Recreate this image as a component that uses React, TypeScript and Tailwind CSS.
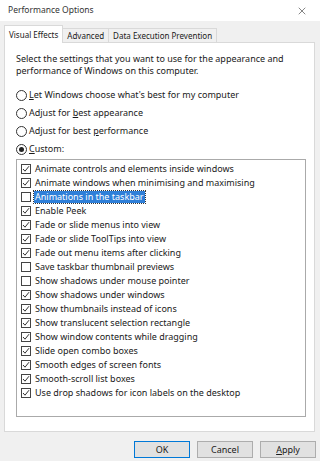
import { X } from "lucide-react";

type Effect = {
  label: string;
  checked: boolean;
  selected?: boolean;
};

const effects: Effect[] = [
  { label: "Animate controls and elements inside windows", checked: true },
  { label: "Animate windows when minimising and maximising", checked: true },
  { label: "Animations in the taskbar", checked: false, selected: true },
  { label: "Enable Peek", checked: true },
  { label: "Fade or slide menus into view", checked: true },
  { label: "Fade or slide ToolTips into view", checked: true },
  { label: "Fade out menu items after clicking", checked: true },
  { label: "Save taskbar thumbnail previews", checked: false },
  { label: "Show shadows under mouse pointer", checked: false },
  { label: "Show shadows under windows", checked: true },
  { label: "Show thumbnails instead of icons", checked: true },
  { label: "Show translucent selection rectangle", checked: true },
  { label: "Show window contents while dragging", checked: true },
  { label: "Slide open combo boxes", checked: true },
  { label: "Smooth edges of screen fonts", checked: true },
  { label: "Smooth-scroll list boxes", checked: true },
  { label: "Use drop shadows for icon labels on the desktop", checked: true },
];

function Radio({ on, children }: { on?: boolean; children: React.ReactNode }) {
  return (
    <div className="flex items-center h-[18px] gap-[2px]">
      <span className="w-[11px] h-[11px] rounded-full border border-[#333] bg-white flex items-center justify-center">
        {on && <span className="w-[5px] h-[5px] rounded-full bg-[#222]" />}
      </span>
      <span>{children}</span>
    </div>
  );
}

function CheckBox({ checked }: { checked: boolean }) {
  return (
    <span className="w-[10px] h-[10px] border border-[#444] bg-white flex items-center justify-center shrink-0">
      {checked && (
        <svg width="8" height="8" viewBox="0 0 8 8">
          <polyline points="1,4 3,6.2 7,1.2" fill="none" stroke="#333" strokeWidth="1" />
        </svg>
      )}
    </span>
  );
}

export default function App() {
  return (
    <div
      className="w-[320px] h-[461px] bg-[#f0f0f0] text-[#1a1a1a] text-[9px] overflow-hidden"
      style={{ fontFamily: '"Noto Sans", "Open Sans", sans-serif' }}
    >
      {/* TITLE BAR */}
      <div className="h-[21px] bg-white flex items-center justify-between pl-[8px] pr-[12px]">
        <span className="text-[8.5px] text-[#333]">Performance Options</span>
        <X size={12} strokeWidth={1.2} className="text-[#333]" />
      </div>

      {/* TABS */}
      <div className="flex items-end pl-[4px] h-[21px] text-[8px]">
        <div className="relative z-10 h-[18px] -mb-px px-[4px] bg-white border border-b-0 border-[#d9d9d9] flex items-center">
          Visual Effects
        </div>
        <div className="h-[14px] px-[4px] border border-l-0 border-b-0 border-[#d9d9d9] flex items-center">
          Advanced
        </div>
        <div className="h-[14px] px-[4px] border border-l-0 border-b-0 border-[#d9d9d9] flex items-center">
          Data Execution Prevention
        </div>
      </div>

      {/* PANEL */}
      <div className="ml-[4px] w-[311px] h-[390px] bg-white border border-[#d9d9d9] pl-[11px] pr-[10px] pt-[10px]">
        <p className="leading-[12px] whitespace-nowrap">
          Select the settings that you want to use for the appearance and
          <br />
          performance of Windows on this computer.
        </p>

        <div className="mt-[9px] flex flex-col">
          <Radio>
            <span className="underline">L</span>et Windows choose what's best for my computer
          </Radio>
          <Radio>
            Adjust for <span className="underline">b</span>est appearance
          </Radio>
          <Radio>
            Adjust for best <span className="underline">p</span>erformance
          </Radio>
          <Radio on>
            <span className="underline">C</span>ustom:
          </Radio>
        </div>

        {/* LIST BOX */}
        <div className="mt-[1px] w-[290px] h-[258px] border border-[#aaa] pt-[2px] pl-[4px]">
          {effects.map((e) => (
            <div key={e.label} className="h-[14px] flex items-center gap-[3px]">
              <CheckBox checked={e.checked} />
              <span
                className={
                  e.selected
                    ? "bg-[#2f7fd8] text-white px-[1px] leading-[12px] outline outline-1 outline-dotted outline-[#333]"
                    : "px-[1px]"
                }
              >
                {e.label}
              </span>
            </div>
          ))}
        </div>
      </div>

      {/* BUTTONS */}
      <div className="flex justify-end gap-[7px] pr-[4px] mt-[9px]">
        <button className="w-[56px] h-[17px] bg-[#e1e1e1] border border-[#0078d7] text-[9px]">
          OK
        </button>
        <button className="w-[56px] h-[17px] bg-[#e1e1e1] border border-[#adadad] text-[9px]">
          Cancel
        </button>
        <button className="w-[56px] h-[17px] bg-[#e1e1e1] border border-[#adadad] text-[9px]">
          <span className="underline">A</span>pply
        </button>
      </div>
    </div>
  );
}
